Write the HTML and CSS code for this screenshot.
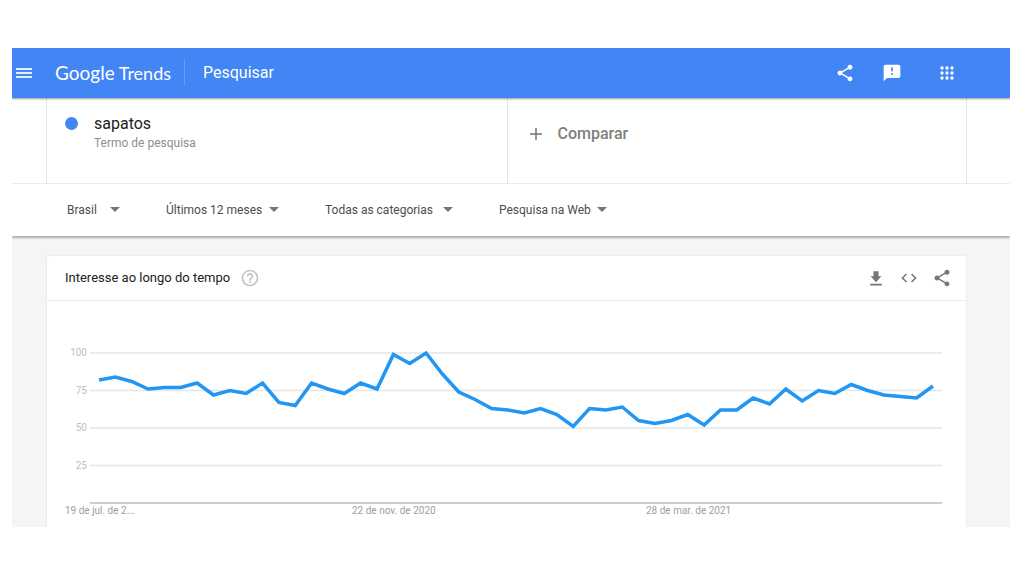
FILE: index.html
```html
<!DOCTYPE html>
<html lang="pt-BR">
<head>
    <meta charset="UTF-8">
    <meta name="viewport" content="width=device-width, initial-scale=1.0">
    <title>sapatos - Google Trends</title>
    <link rel="stylesheet" href="styles.css">
</head>
<body>

<svg class="sprite" width="0" height="0" aria-hidden="true">
    <symbol id="icon-share" viewBox="0 0 24 24">
        <path d="M18 16.08c-.76 0-1.44.3-1.96.77L8.91 12.7c.05-.23.09-.46.09-.7s-.04-.47-.09-.7l7.05-4.11c.54.5 1.25.81 2.04.81 1.66 0 3-1.34 3-3s-1.34-3-3-3-3 1.34-3 3c0 .24.04.47.09.7L8.04 9.81C7.5 9.31 6.79 9 6 9c-1.66 0-3 1.34-3 3s1.34 3 3 3c.79 0 1.5-.31 2.04-.81l7.12 4.16c-.05.21-.08.43-.08.65 0 1.61 1.31 2.92 2.92 2.92s2.92-1.31 2.92-2.92-1.31-2.92-2.92-2.92z"/>
    </symbol>
</svg>

<div class="app">
    <header class="topbar">
        <button class="icon-btn menu-btn" aria-label="Menu">
            <svg viewBox="0 0 16 12"><path d="M0 1h16v2H0zM0 5h16v2H0zM0 9h16v2H0z"/></svg>
        </button>
        <a class="logo" href="#"><span class="logo-google">Google</span> <span class="logo-trends">Trends</span></a>
        <h1 class="page-name">Pesquisar</h1>
        <div class="top-actions">
            <button class="icon-btn" aria-label="Compartilhar">
                <svg viewBox="0 0 24 24"><use href="#icon-share"/></svg>
            </button>
            <button class="icon-btn" aria-label="Enviar feedback">
                <svg viewBox="0 0 24 24"><path d="M20 2H4c-1.1 0-1.99.9-1.99 2L2 22l4-4h14c1.1 0 2-.9 2-2V4c0-1.1-.9-2-2-2zm-7 12h-2v-2h2v2zm0-4h-2V5h2v5z"/></svg>
            </button>
            <button class="icon-btn apps-btn" aria-label="Google Apps">
                <svg viewBox="0 0 24 24">
                    <circle cx="6" cy="6" r="2"/><circle cx="12" cy="6" r="2"/><circle cx="18" cy="6" r="2"/>
                    <circle cx="6" cy="12" r="2"/><circle cx="12" cy="12" r="2"/><circle cx="18" cy="12" r="2"/>
                    <circle cx="6" cy="18" r="2"/><circle cx="12" cy="18" r="2"/><circle cx="18" cy="18" r="2"/>
                </svg>
            </button>
        </div>
    </header>

    <section class="terms">
        <div class="term">
            <span class="term-dot"></span>
            <div>
                <div class="term-name">sapatos</div>
                <div class="term-type">Termo de pesquisa</div>
            </div>
        </div>
        <button class="compare">
            <svg viewBox="0 0 12 12"><path d="M6 0v12M0 6h12"/></svg>
            Comparar
        </button>
    </section>

    <nav class="filters">
        <div class="filter">
            <select class="filter-geo" aria-label="Região"><option>Brasil</option></select>
        </div>
        <div class="filter">
            <select aria-label="Período"><option>Últimos 12 meses</option></select>
        </div>
        <div class="filter">
            <select class="filter-cat" aria-label="Categoria"><option>Todas as categorias</option></select>
        </div>
        <div class="filter">
            <select aria-label="Tipo de pesquisa"><option>Pesquisa na Web</option></select>
        </div>
    </nav>

    <main class="content">
        <section class="card">
            <div class="card-header">
                <h2>Interesse ao longo do tempo</h2>
                <button class="icon-btn help-btn" aria-label="Ajuda">
                    <svg viewBox="0 0 24 24"><path d="M11 18h2v-2h-2v2zm1-16C6.48 2 2 6.48 2 12s4.48 10 10 10 10-4.48 10-10S17.52 2 12 2zm0 18c-4.41 0-8-3.59-8-8s3.59-8 8-8 8 3.59 8 8-3.59 8-8 8zm0-14c-2.21 0-4 1.79-4 4h2c0-1.1.9-2 2-2s2 .9 2 2c0 2-3 1.75-3 5h2c0-2.25 3-2.5 3-5 0-2.21-1.79-4-4-4z"/></svg>
                </button>
                <div class="card-actions">
                    <button class="icon-btn" aria-label="Baixar CSV">
                        <svg viewBox="0 0 24 24"><path d="M18.500 10H15V4H9v6H5.500l6.500 7 6.500-7zM5 19v2h14v-2z"/></svg>
                    </button>
                    <button class="icon-btn" aria-label="Incorporar">
                        <svg viewBox="-1 -1 26 26"><path d="M9.4 16.6L4.800 12l4.600-4.600L8 6l-6 6 6 6 1.400-1.400zm5.200 0l4.600-4.600-4.600-4.600L16 6l6 6-6 6-1.400-1.400z"/></svg>
                    </button>
                    <button class="icon-btn" aria-label="Compartilhar gráfico">
                        <svg viewBox="0 0 24 24"><use href="#icon-share"/></svg>
                    </button>
                </div>
            </div>
            <div class="chart">
                <div class="y-axis">
                    <span>100</span>
                    <span>75</span>
                    <span>50</span>
                    <span>25</span>
                    <span class="y-zero"></span>
                </div>
                <div class="plot">
                    <svg viewBox="0 0 852 150" preserveAspectRatio="none">
                        <path class="grid-line" d="M0 0H852M0 37.5H852M0 75H852M0 112.5H852"/>
                        <path class="base-line" d="M0 150H852"/>
                        <polyline id="trend" class="trend-line"/>
                    </svg>
                </div>
                <div class="x-axis">
                    <span>19 de jul. de 2...</span>
                    <span>22 de nov. de 2020</span>
                    <span>28 de mar. de 2021</span>
                </div>
            </div>
        </section>
    </main>
</div>

<script>
    // weekly interest, 0-100
    const interest = [
        82, 84, 81, 76, 77, 77, 80, 72, 75, 73, 80, 67, 65,
        80, 76, 73, 80, 76, 99, 93, 100, 86, 74, 69, 63, 62,
        60, 63, 59, 51, 63, 62, 64, 55, 53, 55, 59, 52, 62,
        62, 70, 66, 76, 68, 75, 73, 79, 75, 72, 71, 70, 78
    ];
    const plotWidth = 852;
    const plotHeight = 150;
    const inset = 9;
    const step = (plotWidth - inset * 2) / (interest.length - 1);

    const points = interest.map((value, i) => {
        const x = inset + i * step;
        const y = plotHeight - value * plotHeight / 100;
        return `${x.toFixed(1)},${y}`;
    });
    document.getElementById('trend').setAttribute('points', points.join(' '));
</script>

</body>
</html>
```
FILE: styles.css
```css
* {
    box-sizing: border-box;
}
body {
    margin: 0;
    padding: 48px 14px 48px 12px;
    background: #fff;
    font-family: Roboto, Arial, sans-serif;
    font-size: 13px;
    color: #212121;
}
h1, h2 {
    margin: 0;
    font-weight: 400;
}
button, select {
    font-family: inherit;
    border: none;
    background: none;
    padding: 0;
    margin: 0;
    cursor: pointer;
}
.sprite {
    position: absolute;
}
.app {
    background: #f5f5f5;
    overflow: hidden;
}
.icon-btn {
    display: flex;
    color: inherit;
}
.icon-btn svg {
    width: 20px;
    height: 20px;
    fill: currentColor;
}

/* top bar */
.topbar {
    display: flex;
    align-items: center;
    height: 50px;
    padding: 0 53px 0 4px;
    background: #4285f4;
    color: #fff;
    position: relative;
    box-shadow: 0 1px 2px rgba(0, 0, 0, 0.4);
}
.menu-btn svg {
    width: 16px;
    height: 12px;
    opacity: 0.85;
}
.logo {
    margin-left: 23px;
    padding-right: 13px;
    border-right: 1px solid #669df6;
    font-family: Lato, Roboto, sans-serif;
    font-size: 18px;
    line-height: 26px;
    color: #fff;
    text-decoration: none;
    white-space: nowrap;
}
.logo-google {
    font-size: 19px;
}
.page-name {
    margin-left: 18px;
    font-size: 16px;
    line-height: 20px;
}
.top-actions {
    display: flex;
    align-items: center;
    gap: 27px;
    margin-left: auto;
}
.apps-btn {
    margin-left: 8px;
}

/* search terms */
.terms {
    display: grid;
    grid-template-columns: 1fr 1fr;
    height: 86px;
    padding: 0 43px 0 34px;
    background: #fff;
    border-bottom: 1px solid #ebebeb;
}
.term, .compare {
    border-left: 1px solid #e4e4e4;
}
.term {
    display: flex;
    align-items: flex-start;
    padding: 16px 18px;
}
.term-dot {
    width: 13px;
    height: 13px;
    margin: 3px 16px 0 0;
    border-radius: 50%;
    background: #4285f4;
}
.term-name {
    font-size: 16px;
    line-height: 20px;
}
.term-type {
    font-size: 12px;
    line-height: 18px;
    color: #8e8e8e;
}
.compare {
    display: flex;
    align-items: center;
    gap: 16px;
    padding: 0 22px 14px;
    border-right: 1px solid #e4e4e4;
    font-size: 16px;
    font-weight: 500;
    color: #808080;
}
.compare svg {
    width: 12px;
    height: 12px;
    fill: none;
    stroke: #757575;
    stroke-width: 1.5;
}

/* filters */
.filters {
    display: flex;
    align-items: center;
    gap: 46px;
    height: 52px;
    padding: 0 55px;
    background: #fff;
    box-shadow: 0 2px 2px rgba(0, 0, 0, 0.3);
}
.filter {
    position: relative;
}
.filter select {
    appearance: none;
    padding-right: 16px;
    font-size: 12px;
    line-height: 20px;
    color: #4d4d4d;
}
.filter .filter-geo {
    width: 53px;
}
.filter .filter-cat {
    width: 128px;
}
.filter::after {
    content: "";
    position: absolute;
    right: 0;
    top: 50%;
    margin-top: -3px;
    border: 5px solid transparent;
    border-top-color: #757575;
    border-bottom: none;
    pointer-events: none;
}

/* chart card */
.content {
    padding: 20px 44px 0 35px;
}
.card {
    background: #fff;
    border-radius: 2px 2px 0 0;
    box-shadow: 0 0 2px rgba(0, 0, 0, 0.14);
}
.card-header {
    display: flex;
    align-items: center;
    height: 45px;
    padding: 0 14px 0 18px;
    border-bottom: 1px solid #ebebeb;
}
.card-header h2 {
    font-size: 13px;
    line-height: 20px;
}
.help-btn {
    margin-left: 10px;
    color: #c4c4c4;
}
.card-actions {
    display: flex;
    gap: 13px;
    margin-left: auto;
    color: #757575;
}
.chart {
    display: grid;
    grid-template-columns: 22px 1fr;
    column-gap: 3px;
    padding: 46px 24px 10px 18px;
    font-size: 10px;
    line-height: 12px;
}
.y-axis {
    display: flex;
    flex-direction: column;
    justify-content: space-between;
    text-align: right;
    color: #bdbdbd;
}
.y-axis span {
    height: 12px;
}
.y-axis .y-zero {
    height: 8px;
}
.plot {
    padding: 6px 0 2px;
}
.plot svg {
    display: block;
    width: 100%;
    height: 150px;
    overflow: visible;
}
.plot path, .plot polyline {
    fill: none;
    vector-effect: non-scaling-stroke;
}
.grid-line {
    stroke: #e6e6e6;
    stroke-width: 1.5;
}
.base-line {
    stroke: #ccc;
    stroke-width: 2;
}
.plot .trend-line {
    stroke: #2196f3;
    stroke-width: 3.5;
}
.x-axis {
    grid-column: 1 / -1;
    display: grid;
    grid-template-columns: 287fr 294fr 296fr;
    color: #9e9e9e;
    white-space: nowrap;
}
```
